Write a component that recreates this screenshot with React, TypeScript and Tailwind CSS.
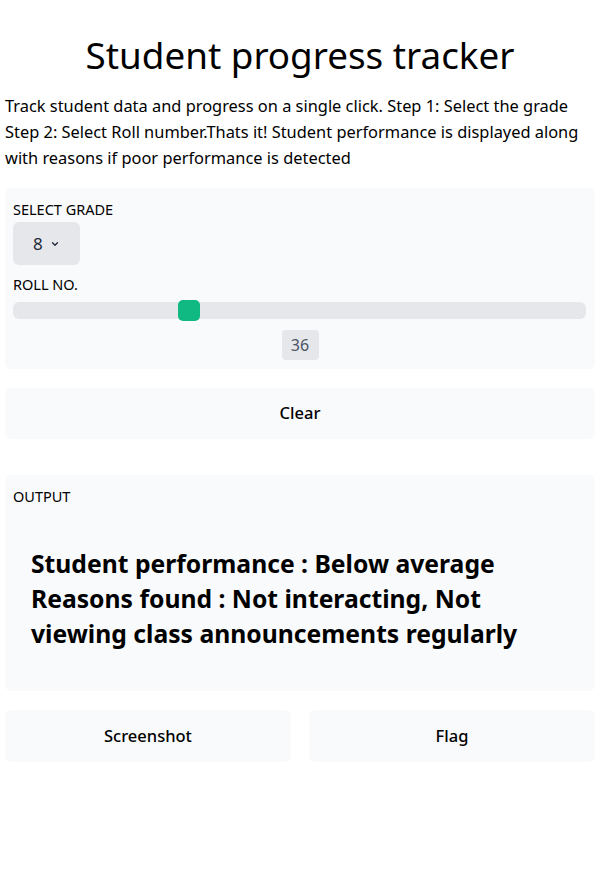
import { useState } from "react";

export default function App() {
  const [grade] = useState("8");
  const [roll] = useState(36);
  // posisi thumb slider (persen dari lebar track)
  const pct = 30.7;

  return (
    <div className="min-h-screen bg-white text-black" style={{ fontFamily: '"Noto Sans", "Open Sans", sans-serif' }}>
      <div className="pl-[5px] pr-[7px] pt-[31px]">
        {/* Judul */}
        <h1 className="text-center text-[36.8px] leading-[48px] font-normal">Student progress tracker</h1>
        <p className="mt-[14px] text-[16.4px] leading-[26px]">
          Track student data and progress on a single click. Step 1: Select the grade Step 2: Select Roll number.Thats it! Student performance is displayed along with reasons if poor performance is detected
        </p>

        {/* Input panel */}
        <div className="mt-[17px] bg-[#f9fafb] rounded-md px-[8px] pt-[12px] pb-[9px]">
          <div className="text-[14.5px] leading-[18px] uppercase">Select grade</div>
          <div className="mt-[4px] inline-flex items-center gap-[7px] h-[43px] px-[20px] bg-[#e5e7eb] rounded-md text-[17px] text-[#1f2937]">
            <span>{grade}</span>
            <svg width="10" height="10" viewBox="0 0 24 24" fill="none" stroke="currentColor" strokeWidth="3" strokeLinecap="round" strokeLinejoin="round">
              <path d="M6 9l6 6 6-6" />
            </svg>
          </div>
          <div className="mt-[10px] text-[14.5px] leading-[18px] uppercase">Roll no.</div>
          <div className="relative mt-[9px] mr-[1px] h-[17px] bg-[#e5e7eb] rounded-md">
            <div className="absolute top-[-2px] w-[22px] h-[21px] rounded-[5px] bg-[#10b981]" style={{ left: `calc(${pct}% - 11px)` }} />
          </div>
          <div className="flex justify-center mt-[11px]">
            <div className="h-[30px] w-[37px] flex items-center justify-center bg-[#e5e7eb] rounded-sm text-[16px] text-[#4b5563]">{roll}</div>
          </div>
        </div>

        <button className="mt-[19px] w-full h-[51px] bg-[#f9fafb] rounded-md text-[16.5px] font-medium">Clear</button>

        {/* Output */}
        <div className="mt-[36px] bg-[#f9fafb] rounded-md px-[8px] pt-[12px] h-[216px]">
          <div className="text-[14.5px] leading-[18px] uppercase">Output</div>
          <div className="mt-[41px] px-[18px] text-[24.7px] leading-[35px] font-bold">
            Student performance : Below average
            <br />
            Reasons found : Not interacting, Not viewing class announcements regularly
          </div>
        </div>

        <div className="mt-[19px] grid grid-cols-2 gap-[18px]">
          <button className="h-[52px] bg-[#f9fafb] rounded-md text-[16.5px] font-medium">Screenshot</button>
          <button className="h-[52px] bg-[#f9fafb] rounded-md text-[16.5px] font-medium">Flag</button>
        </div>
      </div>
    </div>
  );
}
